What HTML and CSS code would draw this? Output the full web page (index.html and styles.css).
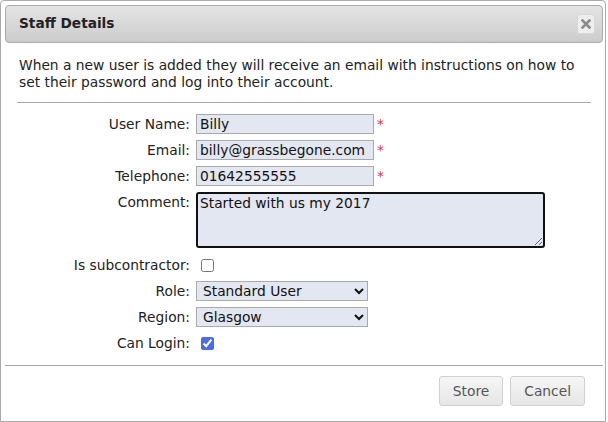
FILE: index.html
```html
<!DOCTYPE html>
<html>

<head>
  <title>Staff Details</title>
  <link rel="stylesheet" href="styles.css">
</head>

<body>
  <div class="dialog">
    <div class="titlebar">
      <span class="title">Staff Details</span>
      <button class="close-btn" title="Close">
        <svg width="10" height="10" viewBox="0 0 10 10">
          <path d="M1.5 1.5 L8.5 8.5 M8.5 1.5 L1.5 8.5" stroke="#8a8a8a" stroke-width="2.6" stroke-linecap="square" />
        </svg>
      </button>
    </div>

    <div class="content">
      <p class="intro">When a new user is added they will receive an email with instructions on how to set their password and log into their account.</p>
      <hr class="divider">

      <div class="form">
        <label class="form-label" for="username">User Name:</label>
        <div class="field"><input type="text" id="username" class="text-input" value="Billy"><span class="required">*</span></div>

        <label class="form-label" for="email">Email:</label>
        <div class="field"><input type="text" id="email" class="text-input" value="billy@grassbegone.com"><span class="required">*</span></div>

        <label class="form-label" for="telephone">Telephone:</label>
        <div class="field"><input type="text" id="telephone" class="text-input" value="01642555555"><span class="required">*</span></div>

        <label class="form-label comment-label" for="comment">Comment:</label>
        <div class="field"><textarea id="comment" class="comment-input">Started with us my 2017</textarea></div>

        <label class="form-label" for="subcontractor">Is subcontractor:</label>
        <div class="field"><input type="checkbox" id="subcontractor" class="check"></div>

        <label class="form-label" for="role">Role:</label>
        <div class="field">
          <select id="role" class="select-input">
            <option>Standard User</option>
            <option>Administrator</option>
          </select>
        </div>

        <label class="form-label" for="region">Region:</label>
        <div class="field">
          <select id="region" class="select-input">
            <option>Glasgow</option>
            <option>Edinburgh</option>
          </select>
        </div>

        <label class="form-label" for="canlogin">Can Login:</label>
        <div class="field"><input type="checkbox" id="canlogin" class="check" checked></div>
      </div>
    </div>

    <div class="buttonpane">
      <button class="dialog-btn">Store</button>
      <button class="dialog-btn">Cancel</button>
    </div>
  </div>
</body>

</html>
```

FILE: styles.css
```css
body {
  margin: 0;
  background-color: #FFF;
  font-family: "DejaVu Sans", Verdana, sans-serif;
  font-size: 13.8px;
  color: #222;
}

.dialog {
  box-sizing: border-box;
  width: 606px;
  height: 422px;
  border: 1px solid #AAA;
  border-radius: 4px 4px 0 0;
  background-color: #FFF;
}

.titlebar {
  box-sizing: border-box;
  height: 38px;
  margin: 4px 2px 0 4px;
  padding: 0 7px 3px 13px;
  display: flex;
  align-items: center;
  justify-content: space-between;
  border: 1px solid #AAA;
  border-radius: 4px;
  background: linear-gradient(#E4E4E4, #CCC);
}

.title {
  font-weight: bold;
  font-size: 13.7px;
  color: #222;
}

.close-btn {
  width: 18px;
  height: 20px;
  margin-top: 3px;
  padding: 0;
  display: flex;
  align-items: center;
  justify-content: center;
  border: 1px solid #D8D8D8;
  border-radius: 3px;
  background-color: #EEE;
}

.content {
  padding: 0 14px 0 16px;
}

.intro {
  margin: 14px 0 0 2px;
  line-height: 17px;
}

.divider {
  margin: 11px 0 0 0;
  border: none;
  border-top: 1px solid #A8A8A8;
}

.form {
  display: grid;
  grid-template-columns: 173px 1fr;
  column-gap: 6px;
  row-gap: 6px;
  margin-top: 11px;
}

.form-label {
  text-align: right;
  line-height: 20px;
}

.comment-label {
  align-self: start;
}

.field {
  display: flex;
  align-items: center;
  min-height: 20px;
}

.text-input {
  box-sizing: border-box;
  width: 178px;
  height: 20px;
  padding: 0 3px;
  border: 1px solid #AAA;
  background-color: #E3E7F1;
  font-family: inherit;
  font-size: 13.8px;
  color: #111;
}

.required {
  color: #E8343A;
  margin-left: 3px;
  align-self: flex-start;
  line-height: 20px;
}

.comment-input {
  box-sizing: border-box;
  width: 349px;
  height: 56px;
  margin: 0 0 1px 0;
  padding: 1px 2px;
  border: 2px solid #111;
  border-radius: 3px;
  background-color: #E3E7F1;
  font-family: inherit;
  font-size: 13.8px;
  color: #111;
  resize: both;
  outline: none;
  display: block;
}

.check {
  width: 13px;
  height: 13px;
  margin: 0 0 0 5px;
  accent-color: #4A6CE8;
}

.select-input {
  box-sizing: border-box;
  width: 172px;
  height: 20px;
  padding: 0 2px;
  border: 1px solid #AAA;
  border-radius: 0;
  background-color: #E3E7F1;
  font-family: inherit;
  font-size: 13.8px;
  color: #111;
}

.buttonpane {
  margin: 12px 2px 0 4px;
  padding: 10px 18px 0 0;
  border-top: 1px solid #AAA;
  display: flex;
  justify-content: flex-end;
  gap: 7px;
}

.dialog-btn {
  height: 30px;
  padding: 0 13px;
  border: 1px solid #D0D0D0;
  border-radius: 3px;
  background: linear-gradient(#F6F6F6, #E6E6E6);
  font-family: inherit;
  font-size: 13.8px;
  color: #555;
}
```
